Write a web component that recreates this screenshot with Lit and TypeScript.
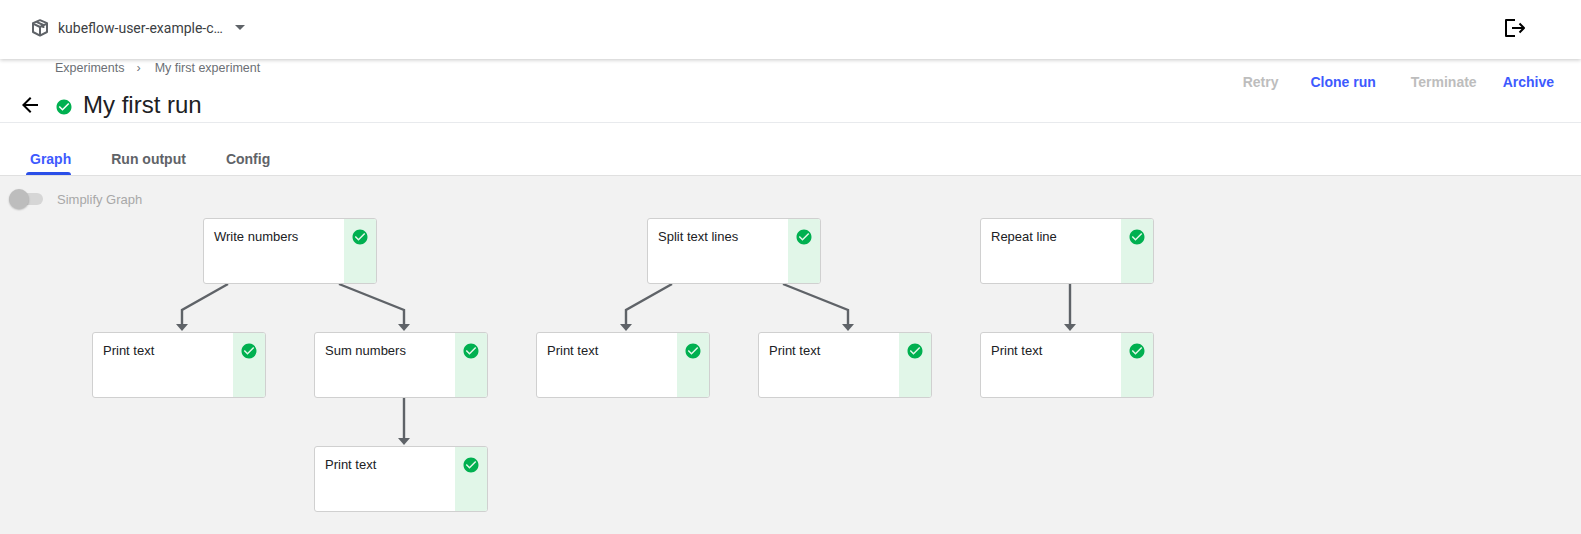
import { LitElement, html, css, svg } from 'lit';
import { customElement } from 'lit/decorators.js';

const CHECK_CIRCLE =
  'M12 2C6.48 2 2 6.48 2 12s4.48 10 10 10 10-4.48 10-10S17.52 2 12 2zm-2 15l-5-5 1.41-1.41L10 14.17l7.59-7.59L19 8l-9 9z';

// Graph positions are relative to the top left of the canvas
const CANVAS_TOP = 176;

const NODES = [
  { label: 'Write numbers', x: 203, y: 218 },
  { label: 'Print text', x: 92, y: 332 },
  { label: 'Sum numbers', x: 314, y: 332 },
  { label: 'Print text', x: 314, y: 446 },
  { label: 'Split text lines', x: 647, y: 218 },
  { label: 'Print text', x: 536, y: 332 },
  { label: 'Print text', x: 758, y: 332 },
  { label: 'Repeat line', x: 980, y: 218 },
  { label: 'Print text', x: 980, y: 332 },
];

const EDGES = [
  [[228, 284], [182, 310], [182, 325]],
  [[339, 284], [404, 310], [404, 325]],
  [[404, 398], [404, 439]],
  [[672, 284], [626, 310], [626, 325]],
  [[783, 284], [848, 310], [848, 325]],
  [[1070, 284], [1070, 325]],
];

@customElement('app-root')
export class AppRoot extends LitElement {
  static styles = css`
    :host {
      display: flex;
      flex-direction: column;
      height: 534px;
      overflow: hidden;
      background: #fff;
      font-family: 'Liberation Sans', sans-serif;
      color: #202124;
    }
    .topbar {
      position: relative;
      z-index: 1;
      flex: none;
      height: 59px;
      display: flex;
      align-items: center;
      justify-content: space-between;
      padding: 0 56px 4px 31px;
      box-sizing: border-box;
      background: #fff;
      box-shadow: 0 1px 4px rgba(0, 0, 0, 0.22);
    }
    .namespace {
      display: flex;
      align-items: center;
      font-family: Roboto, sans-serif;
      font-size: 14px;
      color: #3c4043;
    }
    .namespace .name {
      margin-left: 9px;
    }
    .caret {
      width: 0;
      height: 0;
      margin-left: 12px;
      border-left: 5px solid transparent;
      border-right: 5px solid transparent;
      border-top: 5px solid #5f6368;
    }
    .head {
      flex: none;
      height: 64px;
      box-sizing: border-box;
      display: flex;
      justify-content: space-between;
      border-bottom: 1px solid #e8eaed;
    }
    .crumbs {
      display: flex;
      padding: 1px 0 0 55px;
      font-size: 12.5px;
      line-height: 16px;
      color: #6b6f75;
    }
    .crumbs .sep {
      margin: 0 14px 0 12px;
    }
    .title-row {
      display: flex;
      align-items: center;
      margin-top: 13px;
      padding-left: 18px;
    }
    .title-row .status {
      margin: 3px 0 0 13px;
      fill: #00b050;
    }
    .title-row h1 {
      margin: 0 0 0 10px;
      font-size: 24px;
      font-weight: 400;
      line-height: 32px;
    }
    .actions {
      display: flex;
      align-items: flex-start;
      padding: 15px 27px 0 0;
      font-size: 14px;
      font-weight: 700;
      line-height: 16px;
    }
    .actions span {
      color: #3d5afe;
      margin-left: 32px;
    }
    .actions span.off {
      color: #bdbdbd;
    }
    .actions span.terminate {
      margin-left: 35px;
    }
    .actions span.archive {
      margin-left: 26px;
    }
    .tabs {
      flex: none;
      height: 53px;
      box-sizing: border-box;
      display: flex;
      gap: 36px;
      padding: 0 0 0 26px;
      border-bottom: 1px solid #e0e0e0;
      font-size: 14px;
      font-weight: 700;
      color: #5f6368;
    }
    .tab {
      display: flex;
      align-items: flex-end;
      padding: 0 0 8px 4px;
      line-height: 16px;
      position: relative;
    }
    .tab.active {
      color: #3d5afe;
    }
    .tab.active::after {
      content: '';
      position: absolute;
      left: 0;
      right: 0;
      bottom: 0;
      height: 3px;
      border-radius: 3px 3px 0 0;
      background: #2b4fe8;
    }
    .canvas {
      position: relative;
      flex: 1;
      background: #f2f2f2;
    }
    .toggle {
      display: flex;
      align-items: center;
      height: 20px;
      padding: 13px 0 0 9px;
      font-size: 13px;
      color: #a8a8a8;
    }
    .switch {
      position: relative;
      width: 34px;
      height: 12px;
      margin-right: 14px;
      border-radius: 6px;
      background: #d6d6d6;
    }
    .switch::before {
      content: '';
      position: absolute;
      left: 0;
      top: -4px;
      width: 20px;
      height: 20px;
      border-radius: 50%;
      background: #bdbdbd;
      box-shadow: 0 1px 2px rgba(0, 0, 0, 0.25);
    }
    .edges {
      position: absolute;
      left: 0;
      top: 0;
      overflow: visible;
    }
    .edges polyline {
      fill: none;
      stroke: #5f6368;
      stroke-width: 2.4;
    }
    .edges polygon {
      fill: #5f6368;
    }
    .node {
      position: absolute;
      display: flex;
      width: 174px;
      height: 66px;
      box-sizing: border-box;
      border: 1px solid #d0d0d0;
      border-radius: 3px;
      background: #fff;
      overflow: hidden;
    }
    .node .label {
      flex: 1;
      padding: 9px 10px;
      font-size: 13px;
      line-height: 18px;
      color: #202124;
    }
    .node .state {
      flex: none;
      width: 32px;
      display: flex;
      justify-content: center;
      padding-top: 9px;
      box-sizing: border-box;
      background: #e1f6e8;
    }
    .node .state svg {
      fill: #00b050;
    }
  `;

  private _node(n: { label: string; x: number; y: number }) {
    return html`
      <div class="node" style="left:${n.x}px;top:${n.y - CANVAS_TOP}px">
        <div class="label">${n.label}</div>
        <div class="state">
          <svg width="18" height="18" viewBox="0 0 24 24"><path d=${CHECK_CIRCLE}></path></svg>
        </div>
      </div>
    `;
  }

  private _edge(points: number[][]) {
    const pts = points.map(([x, y]) => `${x},${y - CANVAS_TOP}`).join(' ');
    const [ex, ey] = points[points.length - 1];
    const y = ey - CANVAS_TOP;
    return svg`
      <polyline points=${pts}></polyline>
      <polygon points="${ex - 6},${y - 1} ${ex + 6},${y - 1} ${ex},${y + 6}"></polygon>
    `;
  }

  render() {
    return html`
      <div class="topbar">
        <div class="namespace">
          <svg width="18" height="18" viewBox="0 0 18 18" fill="none" stroke="#5f6368" stroke-width="2" stroke-linejoin="round">
            <path d="M9 1.2l7 3v8.8l-7 3.6-7-3.6V4.2z" fill="#fff"></path>
            <path d="M2 4.6l7 3.4 7-3.4M9 8v8.6M5.4 2.8l7 3.2v3"></path>
          </svg>
          <span class="name">kubeflow-user-example-c…</span>
          <span class="caret"></span>
        </div>
        <svg width="20" height="18" viewBox="0 0 20 18" fill="none" stroke="#000" stroke-width="2" stroke-linejoin="round">
          <path d="M10 1H1v16h9M7 9h12M14.5 4.5L19 9l-4.5 4.5"></path>
        </svg>
      </div>

      <div class="head">
        <div>
          <div class="crumbs">
            <span>Experiments</span><span class="sep">›</span><span>My first experiment</span>
          </div>
          <div class="title-row">
            <svg width="24" height="24" viewBox="0 0 24 24"><path d="M20 11H7.83l5.59-5.59L12 4l-8 8 8 8 1.41-1.41L7.83 13H20v-2z"></path></svg>
            <svg class="status" width="18" height="18" viewBox="0 0 24 24"><path d=${CHECK_CIRCLE}></path></svg>
            <h1>My first run</h1>
          </div>
        </div>
        <div class="actions">
          <span class="off">Retry</span>
          <span>Clone run</span>
          <span class="off terminate">Terminate</span>
          <span class="archive">Archive</span>
        </div>
      </div>

      <div class="tabs">
        <div class="tab active">Graph</div>
        <div class="tab">Run output</div>
        <div class="tab">Config</div>
      </div>

      <div class="canvas">
        <div class="toggle"><span class="switch"></span>Simplify Graph</div>
        <svg class="edges" width="1581" height="358">${EDGES.map((e) => this._edge(e))}</svg>
        ${NODES.map((n) => this._node(n))}
      </div>
    `;
  }
}

declare global {
  interface HTMLElementTagNameMap {
    'app-root': AppRoot;
  }
}
